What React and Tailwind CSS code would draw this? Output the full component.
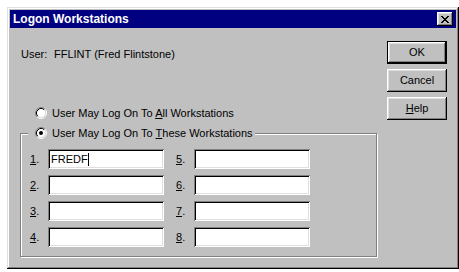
export default function App() {
  const raised =
    "shadow-[inset_-1px_-1px_#000,inset_1px_1px_#fff,inset_-2px_-2px_#808080,inset_2px_2px_#dfdfdf]"
  const sunken =
    "shadow-[inset_1px_1px_#808080,inset_-1px_-1px_#fff,inset_2px_2px_#000,inset_-2px_-2px_#dfdfdf]"

  const Radio = ({ checked }) => (
    <svg width="12" height="12" viewBox="0 0 12 12" className="shrink-0">
      <circle cx="6" cy="6" r="4.5" fill="#fff" />
      <path d="M2.11 9.89 A5.5 5.5 0 0 1 9.89 2.11" fill="none" stroke="#808080" />
      <path d="M9.89 2.11 A5.5 5.5 0 0 1 2.11 9.89" fill="none" stroke="#fff" />
      <path d="M2.82 9.18 A4.5 4.5 0 0 1 9.18 2.82" fill="none" stroke="#000" />
      <path d="M9.18 2.82 A4.5 4.5 0 0 1 2.82 9.18" fill="none" stroke="#dfdfdf" />
      {checked && <circle cx="6" cy="6" r="2" fill="#000" />}
    </svg>
  )

  const Field = ({ n, value }) => (
    <div className="flex items-center h-[20px]">
      <span className="w-[19px] pl-px">
        <span className="underline underline-offset-1">{n}</span>.
      </span>
      <div className={`w-[116px] h-[20px] bg-white ${sunken} flex items-center pl-[3px]`}>
        {value && (
          <>
            <span>{value}</span>
            <span className="w-px h-[13px] bg-black"></span>
          </>
        )}
      </div>
    </div>
  )

  return (
    <div className="w-[459px] h-[272px] bg-white pt-[7px] pl-[7px] overflow-hidden font-['Liberation_Sans',Arial,sans-serif] text-[11px] text-black">
      <div className="w-[452px] h-[262px] bg-[#c0c0c0] p-[3px] flex flex-col shadow-[inset_-1px_-1px_#000,inset_1px_1px_#dfdfdf,inset_-2px_-2px_#808080,inset_2px_2px_#fff]">
        {/* title bar */}
        <div className="h-[18px] shrink-0 bg-[#000080] flex items-center justify-between pl-[3px] pr-[3px]">
          <span className="text-white font-bold text-[12px] leading-none">Logon Workstations</span>
          <div className={`w-[16px] h-[14px] bg-[#c0c0c0] ${raised} flex items-center justify-center`}>
            <svg width="8" height="7" viewBox="0 0 8 7" shapeRendering="crispEdges">
              <path
                d="M0 0h2v1h-2z M6 0h2v1h-2z M1 1h2v1h-2z M5 1h2v1h-2z M2 2h4v1h-4z M3 3h2v1h-2z M2 4h4v1h-4z M1 5h2v1h-2z M5 5h2v1h-2z M0 6h2v1h-2z M6 6h2v1h-2z"
                fill="#000"
              />
            </svg>
          </div>
        </div>

        <div className="flex">
          {/* left side */}
          <div className="w-[367px] pl-[10px]">
            <div className="mt-[20px] h-[13px] leading-[13px] flex">
              <span className="w-[34px] pl-px">User:</span>
              <span>FFLINT (Fred Flintstone)</span>
            </div>

            <div className="mt-[43px] h-[18px] flex items-center pl-[15px] gap-[5px]">
              <Radio />
              <span>
                User May Log On To <span className="underline underline-offset-1">A</span>ll Workstations
              </span>
            </div>

            {/* group box */}
            <div className="mt-[11px] border border-[#808080] shadow-[1px_1px_0_#fff,inset_1px_1px_0_#fff] pb-[9px]">
              <div className="-mt-[8px] ml-[7px] w-fit pl-[7px] pr-[2px] h-[14px] bg-[#c0c0c0] flex items-center gap-[5px]">
                <Radio checked />
                <span>
                  User May Log On To <span className="underline underline-offset-1">T</span>hese Workstations
                </span>
              </div>
              <div className="mt-[9px] grid grid-cols-[135px_135px] gap-x-[11px] gap-y-[6px] pl-[8px] grid-flow-col grid-rows-4">
                <Field n="1" value="FREDF" />
                <Field n="2" />
                <Field n="3" />
                <Field n="4" />
                <Field n="5" />
                <Field n="6" />
                <Field n="7" />
                <Field n="8" />
              </div>
            </div>
          </div>

          {/* buttons */}
          <div className="ml-[10px] w-[60px] pt-[13px] flex flex-col gap-[5px]">
            <button className={`h-[23px] bg-[#c0c0c0] border border-black ${raised}`}>OK</button>
            <button className={`h-[23px] bg-[#c0c0c0] ${raised}`}>Cancel</button>
            <button className={`h-[23px] bg-[#c0c0c0] ${raised}`}>
              <span className="underline underline-offset-1">H</span>elp
            </button>
          </div>
        </div>
      </div>
    </div>
  )
}
